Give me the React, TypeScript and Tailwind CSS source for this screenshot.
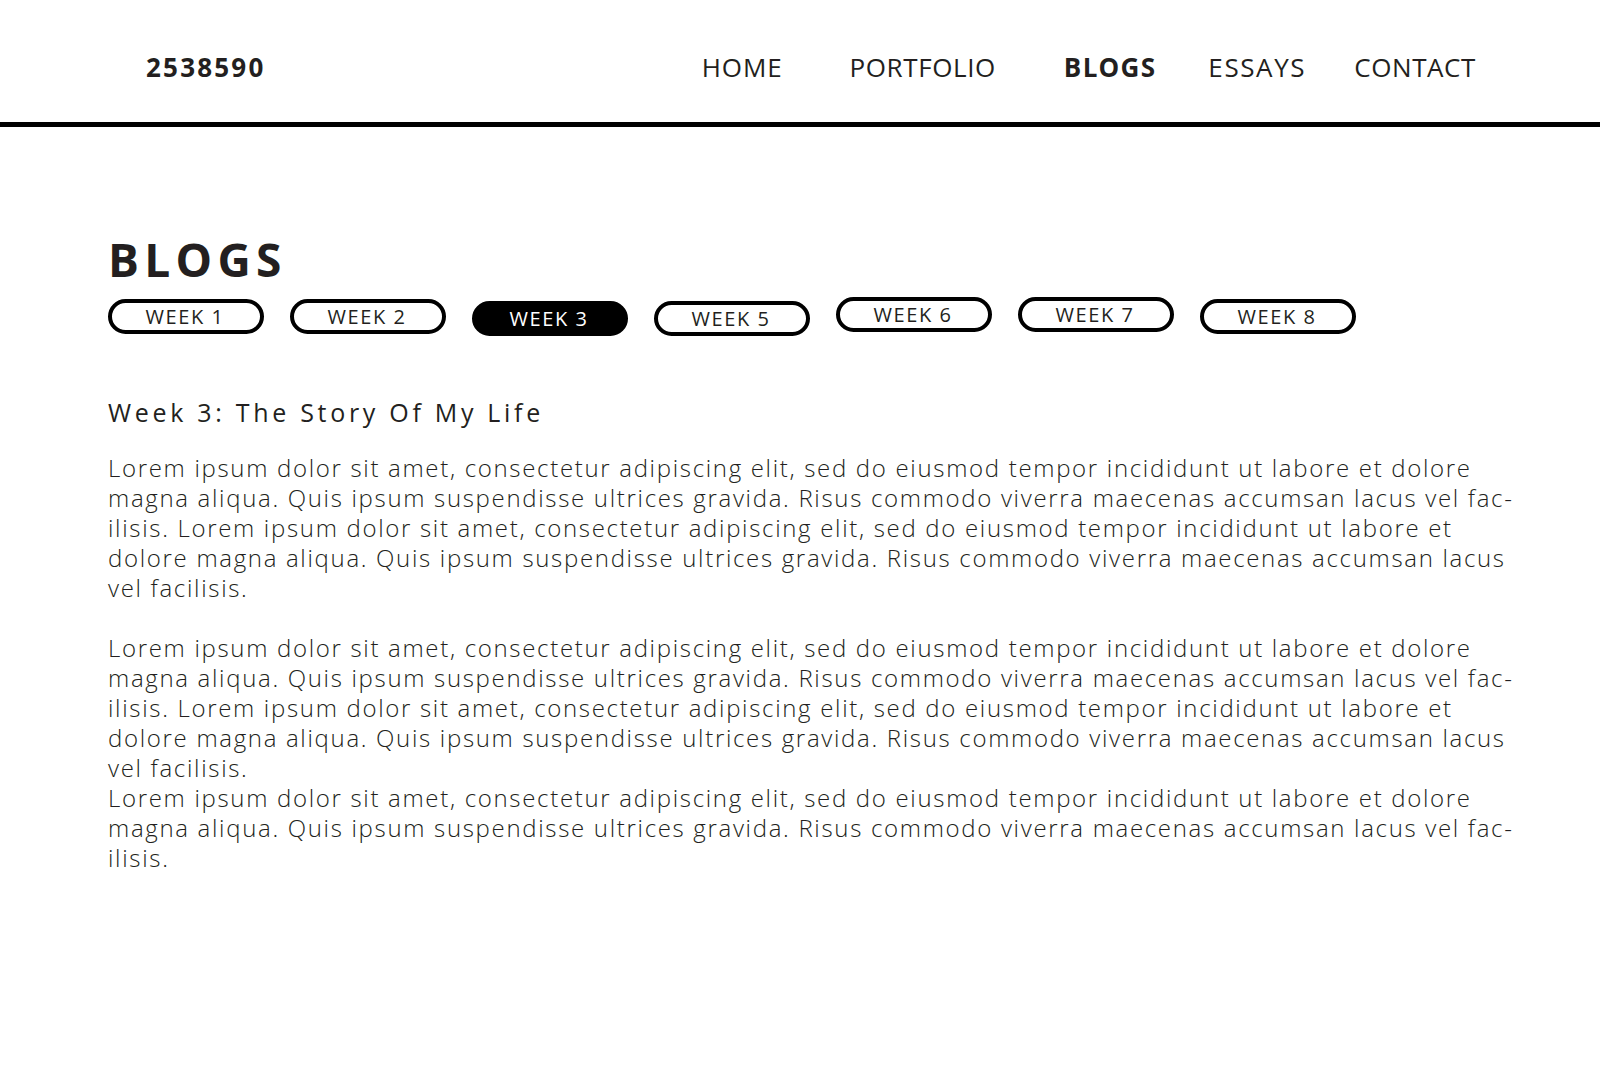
import React from "react";

const FONT = { fontFamily: '"Open Sans", "Noto Sans", sans-serif' };

const L1 = "Lorem ipsum dolor sit amet, consectetur adipiscing elit, sed do eiusmod tempor incididunt ut labore et dolore";
const L2 = "magna aliqua. Quis ipsum suspendisse ultrices gravida. Risus commodo viverra maecenas accumsan lacus vel fac-";
const L3 = "ilisis. Lorem ipsum dolor sit amet, consectetur adipiscing elit, sed do eiusmod tempor incididunt ut labore et";
const L4 = "dolore magna aliqua. Quis ipsum suspendisse ultrices gravida. Risus commodo viverra maecenas accumsan lacus";
const L5 = "vel facilisis.";

const paragraphs: string[][] = [
  [L1, L2, L3, L4, L5],
  [],
  [L1, L2, L3, L4, L5],
  [L1, L2, "ilisis."],
];

const weeks = [
  { label: "WEEK 1", mt: "mt-[2px]", active: false },
  { label: "WEEK 2", mt: "mt-[2px]", active: false },
  { label: "WEEK 3", mt: "mt-[4px]", active: true },
  { label: "WEEK 5", mt: "mt-[4px]", active: false },
  { label: "WEEK 6", mt: "mt-0", active: false },
  { label: "WEEK 7", mt: "mt-0", active: false },
  { label: "WEEK 8", mt: "mt-[2px]", active: false },
];

export default function App() {
  return (
    <div className="min-h-[1080px] w-[1600px] bg-white text-[#231f20]" style={FONT}>
      <header className="flex h-[127px] items-start border-b-[5px] border-black pt-[54px]">
        <div className="pl-[146px] text-[26px] font-bold leading-[26px] tracking-[2.2px] text-[#231f20]">
          2538590
        </div>
        <nav className="ml-auto flex items-start pr-[124px] text-[26px] leading-[26px] text-[#231f20]">
          <a className="tracking-[0.9px]">HOME</a>
          <a className="ml-[67px] tracking-[0.6px]">PORTFOLIO</a>
          <a className="ml-[68px] font-bold tracking-[1.3px]">BLOGS</a>
          <a className="ml-[52px] tracking-[1.6px]">ESSAYS</a>
          <a className="ml-[48px] tracking-[0.6px]">CONTACT</a>
        </nav>
      </header>

      <main className="pl-[108px]">
        <h1 className="mt-[109px] text-[46px] font-bold leading-[46px] tracking-[5.3px] text-[#231f20]">
          BLOGS
        </h1>

        <div className="mt-[15px] flex h-[39px] items-start gap-[26px]">
          {weeks.map((w) => (
            <button
              key={w.label}
              className={
                w.active
                  ? `${w.mt} flex h-[35px] w-[156px] items-center justify-center rounded-full border-[4px] border-black bg-black pr-[2px] text-[20px] leading-none tracking-[1.6px] text-white`
                  : `${w.mt} flex h-[35px] w-[156px] items-center justify-center rounded-full border-[4px] border-black bg-white pr-[2px] text-[20px] leading-none tracking-[1.6px] text-[#231f20]`
              }
            >
              {w.label}
            </button>
          ))}
        </div>

        <h2 className="mt-[64px] text-[25px] font-normal leading-[25px] tracking-[3.7px] text-[#231f20]">
          Week 3: The Story Of My Life
        </h2>

        <div className="mt-[28px] text-[24px] font-light leading-[30px] tracking-[1.68px] text-[#231f20]">
          {paragraphs.map((p, i) =>
            p.length === 0 ? (
              <div key={i} className="h-[30px]" />
            ) : (
              <p key={i}>
                {p.map((line, j) => (
                  <span key={j} className="block whitespace-nowrap">
                    {line}
                  </span>
                ))}
              </p>
            )
          )}
        </div>
      </main>
    </div>
  );
}
